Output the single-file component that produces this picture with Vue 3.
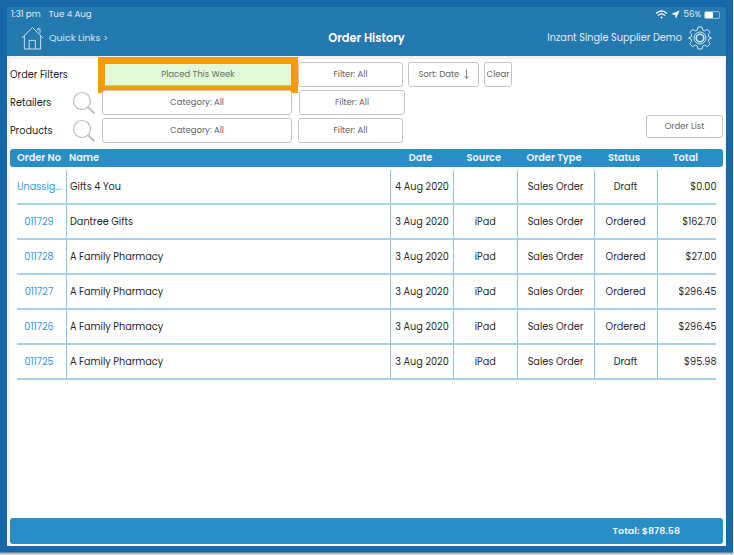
<script setup>
const orders = [
  { no: 'Unassig...', name: 'Gifts 4 You', date: '4 Aug 2020', source: '', type: 'Sales Order', status: 'Draft', total: '$0.00' },
  { no: '011729', name: 'Dantree Gifts', date: '3 Aug 2020', source: 'iPad', type: 'Sales Order', status: 'Ordered', total: '$162.70' },
  { no: '011728', name: 'A Family Pharmacy', date: '3 Aug 2020', source: 'iPad', type: 'Sales Order', status: 'Ordered', total: '$27.00' },
  { no: '011727', name: 'A Family Pharmacy', date: '3 Aug 2020', source: 'iPad', type: 'Sales Order', status: 'Ordered', total: '$296.45' },
  { no: '011726', name: 'A Family Pharmacy', date: '3 Aug 2020', source: 'iPad', type: 'Sales Order', status: 'Ordered', total: '$296.45' },
  { no: '011725', name: 'A Family Pharmacy', date: '3 Aug 2020', source: 'iPad', type: 'Sales Order', status: 'Draft', total: '$95.98' },
]
</script>

<template>
  <div class="page">
    <div class="screen">
      <header class="header">
        <div class="status">
          <span class="clock">1:31 pm</span>
          <span>Tue 4 Aug</span>
          <span class="status-right">
            <svg width="13" height="9" viewBox="0 0 13 9" fill="none" stroke="#fff" stroke-width="1.3">
              <path d="M1 3.4C4.4.4 8.6.4 12 3.4M3 5.4c2.2-1.9 4.8-1.9 7 0" />
              <circle cx="6.5" cy="7.4" r="1" fill="#fff" stroke="none" />
            </svg>
            <svg width="9" height="9" viewBox="0 0 9 9"><path d="M8.6.4 5 8.6 4 5 .4 4z" fill="#fff" /></svg>
            <span>56%</span>
            <span class="battery"><span class="battery-fill"></span></span>
          </span>
        </div>
        <div class="nav">
          <div class="nav-left">
            <svg class="home" width="23" height="24" viewBox="0 0 24 25" fill="none" stroke="#d5e6f1" stroke-width="1">
              <path d="M1 12.500 12 1.500l11 11M3.500 10.500V24h17V10.500M8.500 24v-9h6.500v9M17.500 5V2.800h2.300V7.500" />
            </svg>
            <span>Quick Links &gt;</span>
          </div>
          <div class="title">Order History</div>
          <div class="nav-right">
            <span>Inzant Single Supplier Demo</span>
            <svg width="24" height="24" viewBox="0 0 24 24" fill="none" stroke="#d5e6f1" stroke-width="1">
              <path d="M10 1h4l.7 3 2.100.9 2.700-1.600 2.600 3-1.800 2.500.6 2.200 2.600 1-2.600 1-.6 2.200 1.800 2.500-2.600 3-2.700-1.600-2.100.9-.7 3h-4l-.7-3-2.100-.9-2.700 1.600-2.600-3 1.800-2.500-.6-2.200-2.600-1 2.600-1 .6-2.200-1.800-2.500 2.600-3 2.700 1.600 2.100-.9z" />
              <circle cx="12" cy="12" r="6" />
              <circle cx="12" cy="12" r="3.800" stroke-width="1.600" />
            </svg>
          </div>
        </div>
      </header>

      <main class="content">
        <section class="filters">
          <div class="filter-rows">
            <div class="filter-row">
              <span class="filter-label">Order Filters</span>
              <button class="btn highlighted">Placed This Week</button>
              <button class="btn filter first">Filter: All</button>
              <button class="btn sort">Sort: Date
                <svg class="arrow" width="5" height="10" viewBox="0 0 5 10" fill="none" stroke="#666" stroke-width=".8">
                  <path d="M2.500 0v9.300M.5 7.200l2 2.200 2-2.200" />
                </svg>
              </button>
              <button class="btn clear">Clear</button>
            </div>
            <div class="filter-row">
              <span class="filter-label">Retailers</span>
              <svg class="search" width="24" height="24" viewBox="0 0 24 24" fill="none" stroke="#bdbdbd">
                <circle cx="10" cy="10" r="8.500" stroke-width="1.200" />
                <path d="m16.500 16.500 6 6" stroke-width="2" />
              </svg>
              <button class="btn category">Category: All</button>
              <button class="btn filter second">Filter: All</button>
            </div>
            <div class="filter-row">
              <span class="filter-label">Products</span>
              <svg class="search" width="24" height="24" viewBox="0 0 24 24" fill="none" stroke="#bdbdbd">
                <circle cx="10" cy="10" r="8.500" stroke-width="1.200" />
                <path d="m16.500 16.500 6 6" stroke-width="2" />
              </svg>
              <button class="btn category">Category: All</button>
              <button class="btn filter">Filter: All</button>
            </div>
          </div>
          <button class="btn order-list">Order List</button>
        </section>

        <div class="table-head grid">
          <span class="center no-head">Order No</span>
          <span class="name">Name</span>
          <span class="center">Date</span>
          <span class="center">Source</span>
          <span class="center">Order Type</span>
          <span class="center">Status</span>
          <span class="center">Total</span>
        </div>

        <div class="rows">
          <div v-for="o in orders" :key="o.no" class="row grid">
            <span class="cell center link">{{ o.no }}</span>
            <span class="cell name">{{ o.name }}</span>
            <span class="cell center">{{ o.date }}</span>
            <span class="cell center">{{ o.source }}</span>
            <span class="cell center">{{ o.type }}</span>
            <span class="cell center">{{ o.status }}</span>
            <span class="cell amount">{{ o.total }}</span>
          </div>
        </div>

        <footer class="footer">Total: $878.58</footer>
      </main>
    </div>
  </div>
</template>

<style>
html, body { margin: 0; background: #fff; }
</style>

<style scoped>
.page {
  width: 734px;
  height: 555px;
  box-sizing: border-box;
  padding: 7px 7px 2px 7px;
  border-right: 1px solid #dfe6ec;
  background: linear-gradient(#1767a9 552px, #a9a9a9 553px, #e8e8e8 555px);
  font-family: Poppins, Inter, "Open Sans", sans-serif;
  overflow: hidden;
}
.screen {
  height: 539px;
  display: flex;
  flex-direction: column;
  background: #fff;
}
.header {
  height: 49px;
  flex: none;
  background: #2479af;
  color: #fff;
}
.status {
  height: 13px;
  padding: 1px 3px 0 4px;
  display: flex;
  align-items: center;
  gap: 8px;
  font-size: 8.700px;
  color: #e3eef5;
}
.status-right {
  margin-left: auto;
  display: flex;
  align-items: center;
  gap: 3px;
}
.battery {
  width: 16px;
  height: 8px;
  border: 1px solid #8fb9d3;
  border-radius: 2px;
  box-sizing: border-box;
  display: block;
  margin-right: 3px;
}
.battery-fill {
  display: block;
  width: 8px;
  height: 6px;
  background: #fff;
  border-radius: 1px;
}
.nav {
  height: 36px;
  display: grid;
  grid-template-columns: 1fr auto 1fr;
  align-items: center;
  padding: 0 14px 2px 14px;
  box-sizing: border-box;
}
.nav-left {
  display: flex;
  align-items: center;
  gap: 5px;
  font-size: 9.500px;
  color: #d9e8f2;
}
.title {
  font-size: 11.400px;
  font-weight: 600;
  color: #fff;
}
.nav-right {
  display: flex;
  justify-content: flex-end;
  align-items: center;
  gap: 6px;
  font-size: 9.700px;
  color: #e3eef5;
}
.content {
  flex: 1;
  min-height: 0;
  display: flex;
  flex-direction: column;
  background: #fff;
  border-top: 3px solid #f1f2f6;
  border-left: 3px solid #f1f2f6;
  border-right: 1px solid #f1f2f6;
  box-sizing: border-box;
}
.filters {
  display: flex;
  height: 90px;
  flex: none;
  width: 713px;
  padding-top: 3px;
  box-sizing: border-box;
}
.filter-rows {
  display: flex;
  flex-direction: column;
  gap: 3px;
}
.filter-row {
  height: 25px;
  display: flex;
  align-items: center;
}
.filter-label {
  width: 63px;
  flex: none;
  font-size: 9.700px;
  color: #222;
}
.search { flex: none; margin-right: 6px; margin-left: -1px; }
.btn {
  font-family: inherit;
  height: 25px;
  box-sizing: border-box;
  padding: 0;
  background: #fff;
  border: 1px solid #c4c4c4;
  border-radius: 3px;
  font-size: 8.500px;
  color: #666;
  flex: none;
}
.highlighted {
  width: 186px;
  height: 22px;
  margin: 0 7px 0 32px;
  background: #e2f9d8;
  border: 0;
  border-bottom: 1px solid #b8c4b4;
  border-radius: 0;
  outline: 7px solid #f59c00;
  color: #66705f;
}
.category { width: 190px; }
.filter { width: 105px; margin-left: 6px; }
.filter.first { margin-left: 0; }
.filter.second { margin-left: 7px; width: 106px; }
.sort { width: 71px; margin-left: 5px; }
.arrow { margin-left: 2px; vertical-align: -1.500px; }
.clear { width: 28px; margin-left: 5px; }
.order-list {
  width: 77px;
  height: 23px;
  margin-left: auto;
  align-self: flex-end;
  margin-bottom: 11px;
}
.grid {
  display: grid;
  grid-template-columns: 49px 324px 63px 63.500px 77px 63px 60px;
  align-items: stretch;
}
.table-head {
  height: 18px;
  flex: none;
  align-items: center;
  padding: 0 7px;
  background: #2a8ec6;
  border-radius: 3px;
  color: #eaf5fb;
  font-size: 9.800px;
  font-weight: 600;
  width: 713px;
  box-sizing: border-box;
}
.table-head .name { padding-left: 3px; }
.table-head > :nth-child(n+3) { padding-right: 2px; }
.no-head { white-space: nowrap; padding-right: 5px; }
.center { text-align: center; }
.rows {
  flex: 1;
  padding: 3px 7px 0;
  width: 713px;
  box-sizing: border-box;
}
.row {
  height: 35px;
  box-sizing: border-box;
  border-bottom: 2px solid #a9d1ea;
}
.cell {
  display: block;
  padding-top: 10px;
  font-size: 9.700px;
  line-height: 14px;
  color: #2b2b2b;
  border-left: 1.500px solid #8fc4e6;
  box-sizing: border-box;
}
.cell:first-child { border-left: 0; padding-right: 5px; }
.cell.name { padding-left: 3px; color: #1f1f1f; }
.link { color: #3b95ec; white-space: nowrap; }
.amount { text-align: right; }
.footer {
  height: 26px;
  width: 713px;
  flex: none;
  margin-bottom: 2px;
  box-sizing: border-box;
  padding-right: 43px;
  display: flex;
  align-items: center;
  justify-content: flex-end;
  background: #2a8ec6;
  border-radius: 3px;
  color: #eaf5fb;
  font-size: 9.500px;
  font-weight: 600;
}
</style>
